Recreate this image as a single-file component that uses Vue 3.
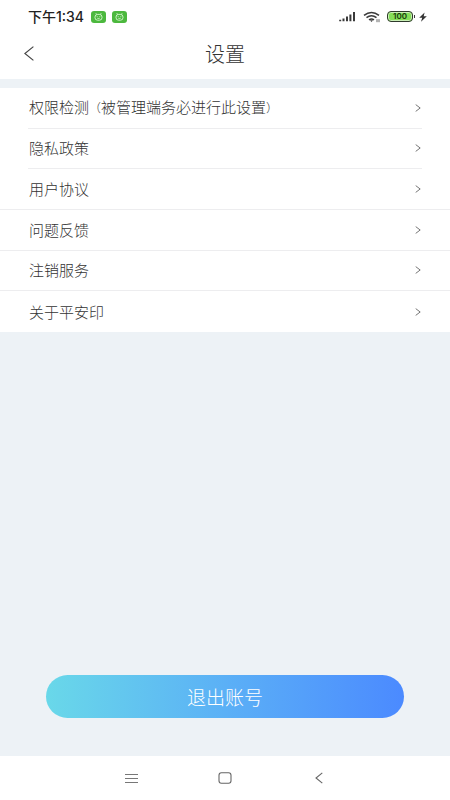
<script setup>
const items = [
  { label: '权限检测', note: '被管理端务必进行此设置', inset: true },
  { label: '隐私政策', inset: true },
  { label: '用户协议' },
  { label: '问题反馈' },
  { label: '注销服务' },
  { label: '关于平安印' },
]
</script>

<template>
  <div class="screen">
    <div class="status">
      <span class="time">下午1:34</span>
      <svg v-for="n in 2" :key="n" class="badge" width="15" height="12" viewBox="0 0 15 12" aria-hidden="true">
        <rect width="15" height="12" rx="3" fill="#4cb83e" />
        <path d="M4.8 2.2l1 1.4M10.2 2.2l-1 1.4" stroke="#e8ffe2" stroke-width=".8" />
        <rect x="4" y="3.4" width="7" height="5.8" rx="2.6" fill="none" stroke="#e8ffe2" stroke-width=".8" />
        <path d="M6.2 5.2v1M8.8 5.2v1M6.3 7.4h2.4" stroke="#e8ffe2" stroke-width=".7" />
      </svg>
      <span class="spacer"></span>
      <svg width="17" height="11" viewBox="0 0 17 11" aria-hidden="true">
        <path d="M1.2 8.7V10.3M4.5 7.4V10.3M8 5.4V10.3M11.4 3.4V10.3M15 1V10.3" stroke="#3a3a3a" stroke-width="2" />
      </svg>
      <svg class="wifi" width="18" height="12" viewBox="0 0 18 12" aria-hidden="true">
        <path d="M1 4.4Q8.5-1.6 16 4.4M3.5 6.7Q8.5 2.7 13.5 6.7M6 8.8Q8.5 7 11 8.8" fill="none" stroke="#3a3a3a" stroke-width="1.5" />
        <path d="M7 9.3h3l-1.5 1.7z" fill="#3a3a3a" />
        <path d="M14 8.2v3M16 8.2v3" stroke="#555" stroke-width=".9" />
      </svg>
      <span class="battery">100</span>
      <svg class="bolt" width="8" height="10" viewBox="0 0 8 10" aria-hidden="true">
        <path d="M5.6 .4L.2 5.8h3L2 9.8 7.8 4.2H4.7z" fill="#333" />
      </svg>
    </div>

    <header class="header">
      <button class="back" type="button" aria-label="返回">
        <svg width="10" height="15" viewBox="0 0 10 15"><path d="M9.4 .6L.9 7.5l8.5 6.9" fill="none" stroke="#444" stroke-width="1.2" /></svg>
      </button>
      <h1>设置</h1>
    </header>

    <main class="content">
      <nav class="list">
        <a v-for="item in items" :key="item.label" href="#" class="row" :class="{ inset: item.inset }">
          <span>{{ item.label }}<template v-if="item.note"><span class="paren">（</span>{{ item.note }}<span class="paren">）</span></template></span>
          <svg width="6" height="8" viewBox="0 0 6 8" aria-hidden="true"><path d="M.7.6L5.2 4 .7 7.4" fill="none" stroke="#777" stroke-width="1" /></svg>
        </a>
      </nav>
      <button class="logout" type="button">退出账号</button>
    </main>

    <footer class="system">
      <button type="button" aria-label="最近任务">
        <svg width="13" height="11" viewBox="0 0 13 11"><path d="M0 1.5h13M0 5.5h13M0 9.5h13" stroke="#777" stroke-width="1" /></svg>
      </button>
      <button type="button" aria-label="主页">
        <svg width="14" height="12" viewBox="0 0 14 12"><rect x="1" y=".8" width="12" height="10.4" rx="2.4" fill="none" stroke="#666" stroke-width="1.1" /></svg>
      </button>
      <button type="button" aria-label="返回">
        <svg width="8" height="12" viewBox="0 0 8 12"><path d="M7.3.8L1 6l6.3 5.2" fill="none" stroke="#666" stroke-width="1.1" /></svg>
      </button>
    </footer>
  </div>
</template>

<style>
body {
  margin: 0;
}
</style>

<style scoped>
.screen {
  display: flex;
  flex-direction: column;
  min-height: 100vh;
  background: #fff;
  font-family: "Noto Sans CJK SC", sans-serif;
  font-weight: 300;
  color: #333;
}
button {
  border: 0;
  padding: 0;
  background: none;
  font: inherit;
  cursor: pointer;
}
svg {
  display: block;
  flex: none;
}
.status {
  display: flex;
  align-items: center;
  height: 33px;
  padding: 0 23px 0 28px;
}
.time {
  margin-right: 7px;
  font-family: Inter, "Noto Sans CJK SC", sans-serif;
  font-size: 14px;
  font-weight: 500;
  line-height: 20px;
  color: #222;
}
.badge {
  margin-right: 6px;
}
.spacer {
  flex: 1;
}
.wifi {
  margin-left: 7px;
}
.battery {
  position: relative;
  box-sizing: border-box;
  width: 26px;
  height: 11px;
  margin-left: 6px;
  border: 1px solid #2f3a2c;
  border-radius: 4px;
  background: #85df58;
  box-shadow: inset 0 0 0 1px #c9efb5;
  font-family: Inter, sans-serif;
  font-size: 8px;
  font-weight: 600;
  line-height: 9px;
  text-align: center;
  color: #163a0c;
}
.battery::after {
  content: "";
  position: absolute;
  top: 3px;
  right: -3px;
  width: 1px;
  height: 3px;
  background: #3a3a3a;
}
.bolt {
  margin-left: 6px;
}
.header {
  display: grid;
  grid-template-columns: 48px 1fr 48px;
  align-items: center;
  height: 41px;
  padding-bottom: 5px;
}
.back {
  display: flex;
  justify-content: flex-end;
  align-items: center;
  width: 34px;
  height: 40px;
}
h1 {
  margin: 0;
  font-size: 20px;
  font-weight: 300;
  line-height: 28px;
  text-align: center;
}
.content {
  display: flex;
  flex: 1;
  flex-direction: column;
  padding: 9px 0 38px;
  background: #edf2f6;
}
.list {
  display: grid;
  grid-auto-rows: 1fr;
  height: 244px;
  background: #fff;
}
.row {
  display: flex;
  align-items: center;
  justify-content: space-between;
  padding: 0 29px;
  border-bottom: 1px solid #ededef;
  font-size: 15px;
  line-height: 24px;
  color: #333;
  text-decoration: none;
}
.row.inset {
  margin: 0 28px;
  padding: 0 1px;
}
.row:last-child {
  border-bottom: 0;
}
.paren {
  font-size: 12px;
}
.logout {
  height: 43px;
  margin: auto 46px 0;
  border-radius: 22px;
  background: linear-gradient(90deg, #69d8e9, #5bb0f6 50%, #4b8aff);
  font-size: 19px;
  line-height: 43px;
  color: #fff;
}
.system {
  display: flex;
  align-items: center;
  justify-content: center;
  gap: 54px;
  height: 44px;
}
.system button {
  display: flex;
  align-items: center;
  justify-content: center;
  width: 40px;
  height: 40px;
}
</style>
